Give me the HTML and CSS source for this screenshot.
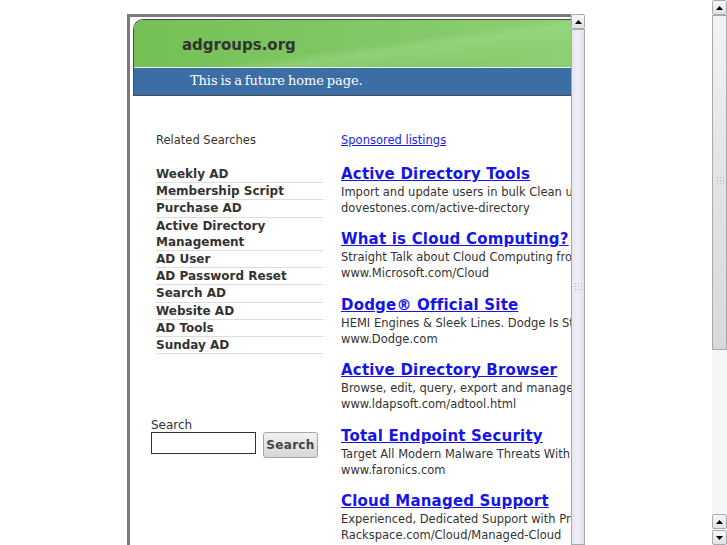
FILE: index.html
```html
<!DOCTYPE html>
<html lang="en">
<head>
    <link rel="stylesheet" href="styles.css">
</head>
<body>
    <div class="page">
        <div class="frame">
            <div class="view">
                <div class="head">
                    <div class="brand">adgroups.org</div>
                    <div class="tag">This is a future home page.</div>
                </div>

                <div class="cols">
                    <div class="left">
                        <div class="rel">Related Searches</div>
                        <ul class="list">
                            <li>Weekly AD</li>
                            <li>Membership Script</li>
                            <li>Purchase AD</li>
                            <li>Active Directory Management</li>
                            <li>AD User</li>
                            <li>AD Password Reset</li>
                            <li>Search AD</li>
                            <li>Website AD</li>
                            <li>AD Tools</li>
                            <li>Sunday AD</li>
                        </ul>
                        <div class="find">
                            <div class="lbl">Search</div>
                            <div class="row">
                                <input type="text" class="box">
                                <button class="go">Search</button>
                            </div>
                        </div>
                    </div>

                    <div class="right">
                        <a class="spon" href="#">Sponsored listings</a>
                        <div class="ad">
                            <a href="#">Active Directory Tools</a>
                            <p>Import and update users in bulk Clean up your Active Directory</p>
                            <p>dovestones.com/active-directory</p>
                        </div>
                        <div class="ad">
                            <a href="#">What is Cloud Computing?</a>
                            <p>Straight Talk about Cloud Computing from Microsoft</p>
                            <p>www.Microsoft.com/Cloud</p>
                        </div>
                        <div class="ad">
                            <a href="#">Dodge&reg; Official Site</a>
                            <p>HEMI Engines &amp; Sleek Lines. Dodge Is Style</p>
                            <p>www.Dodge.com</p>
                        </div>
                        <div class="ad">
                            <a href="#">Active Directory Browser</a>
                            <p>Browse, edit, query, export and manage AD objects</p>
                            <p>www.ldapsoft.com/adtool.html</p>
                        </div>
                        <div class="ad">
                            <a href="#">Total Endpoint Security</a>
                            <p>Target All Modern Malware Threats With Faronics</p>
                            <p>www.faronics.com</p>
                        </div>
                        <div class="ad">
                            <a href="#">Cloud Managed Support</a>
                            <p>Experienced, Dedicated Support with Proactive Monitoring</p>
                            <p>Rackspace.com/Cloud/Managed-Cloud</p>
                        </div>
                    </div>
                </div>
            </div>

            <div class="sb">
                <div class="btn"><svg width="7" height="4" viewBox="0 0 7 4"><path d="M0 4L3.5 0L7 4Z"/></svg></div>
                <div class="thumb small"><div class="grip" style="margin-top: 252px"></div></div>
            </div>
        </div>
    </div>

    <div class="sb outer">
        <div class="btn"><svg width="7" height="4" viewBox="0 0 7 4"><path d="M0 4L3.5 0L7 4Z"/></svg></div>
        <div class="thumb big"><div class="grip" style="margin-top: 160px"></div></div>
        <div class="track"></div>
        <div class="btn"><svg width="7" height="4" viewBox="0 0 7 4"><path d="M0 4L3.5 0L7 4Z"/></svg></div>
        <div class="btn"><svg width="7" height="4" viewBox="0 0 7 4"><path d="M0 0L3.5 4L7 0Z"/></svg></div>
    </div>
</body>
</html>
```

FILE: styles.css
```css
html, body {
    margin: 0;
    height: 545px;
    overflow: hidden;
}

body {
    display: flex;
    background: white;
    font-family: "DejaVu Sans", Verdana, sans-serif;
    color: #333;
}

.page {
    width: 712px;
    padding: 14px 0 0 127px;
    box-sizing: border-box;
}

.frame {
    display: flex;
    width: 458px;
    height: 531px;
}

.view {
    width: 441px;
    border-top: 3px solid #7b7b7b;
    border-left: 3px solid #7b7b7b;
    overflow: hidden;
    background: white;
}

/* header banner */
.head {
    margin: 2px 0 0 3px;
    width: 460px;
    border: 1px solid #4a4a4a;
    border-right: 0;
    border-top-left-radius: 10px;
    overflow: hidden;
}

.brand {
    height: 47px;
    border-bottom: 1px solid #e9f3e2;
    padding-left: 48px;
    line-height: 50px;
    font-size: 15px;
    font-weight: bold;
    color: #333;
    background:
        linear-gradient(172deg, rgba(255,255,255,0) 0%, rgba(255,255,255,0) 52%, rgba(160,220,140,0.45) 60%, rgba(255,255,255,0) 80%),
        linear-gradient(90deg, #74c055 0%, #82c867 55%, #8fd175 100%);
}

.tag {
    height: 27px;
    line-height: 26px;
    padding-left: 56px;
    background: #3b6ea4;
    color: white;
    font-family: "DejaVu Serif", serif;
    font-size: 13px;
    letter-spacing: -0.1px;
    word-spacing: -1px;
}

/* columns */
.cols {
    display: flex;
}

.left {
    width: 185px;
    padding-left: 26px;
    flex-shrink: 0;
}

.rel {
    margin-top: 37px;
    font-size: 11.5px;
    line-height: 14px;
}

.list {
    list-style: none;
    margin: 19px 0 0;
    padding: 0;
    width: 167px;
}

.list li {
    font-size: 12px;
    font-weight: bold;
    line-height: 16.2px;
    color: #333;
    border-bottom: 1px solid #dddddd;
}

.find {
    margin: 64px 0 0 -5px;
    font-size: 12px;
}

.lbl {
    line-height: 14px;
}

.row {
    display: flex;
    align-items: flex-start;
    gap: 7px;
}

.box {
    width: 105px;
    height: 22px;
    box-sizing: border-box;
    border: 1px solid #333;
    margin: 0;
}

.go {
    width: 55px;
    height: 26px;
    margin: 0;
    padding: 0;
    border: 1px solid #a6a6a6;
    border-radius: 3px;
    background: linear-gradient(#f2f2f2, #d6d6d8);
    font-family: "DejaVu Sans", sans-serif;
    font-size: 12px;
    font-weight: bold;
    color: #444;
    letter-spacing: 0.3px;
}

.right {
    white-space: nowrap;
}

.spon {
    display: block;
    margin-top: 37px;
    font-size: 11.5px;
    line-height: 14px;
    color: #1c1ce8;
}

.ad {
    margin-top: 17px;
}

.ad + .ad {
    margin-top: 13.4px;
}

.ad a {
    display: block;
    font-size: 15px;
    font-weight: bold;
    line-height: 20px;
    color: #1515e8;
    letter-spacing: 0.2px;
}

.ad p {
    margin: 0;
    font-size: 11.5px;
    line-height: 16px;
    color: #333;
}

/* scrollbars */
.sb {
    width: 14px;
    display: flex;
    flex-direction: column;
    flex-shrink: 0;
}

.sb.outer {
    width: 15px;
    height: 545px;
}

.btn {
    height: 15px;
    box-sizing: border-box;
    border: 1px solid #a9a9ad;
    border-radius: 2px;
    background: linear-gradient(#f7f7f9, #e2e2e6);
    display: flex;
    align-items: center;
    justify-content: center;
}

.btn + .btn {
    margin-top: 1px;
}

.thumb {
    box-sizing: border-box;
    border: 1px solid #a9a9ad;
    background: linear-gradient(#f3f3f7, #e4e4ea 40%, #d8d8de);
}

.thumb.small {
    flex: 1;
    background: linear-gradient(90deg, #e6e6ec, #eeeef4 50%, #e2e2e8);
}

.thumb.big {
    height: 335px;
}

.grip {
    width: 8px;
    height: 9px;
    margin-left: auto;
    margin-right: auto;
    background-image: radial-gradient(circle, #b5b5bb 0.7px, transparent 0.9px);
    background-size: 3px 3px;
}

.track {
    flex: 1;
    background: #f6f6f6;
    background-image: radial-gradient(circle, #e6e6e6 0.5px, transparent 0.6px);
    background-size: 2px 2px;
    margin-bottom: 1px;
}
```
